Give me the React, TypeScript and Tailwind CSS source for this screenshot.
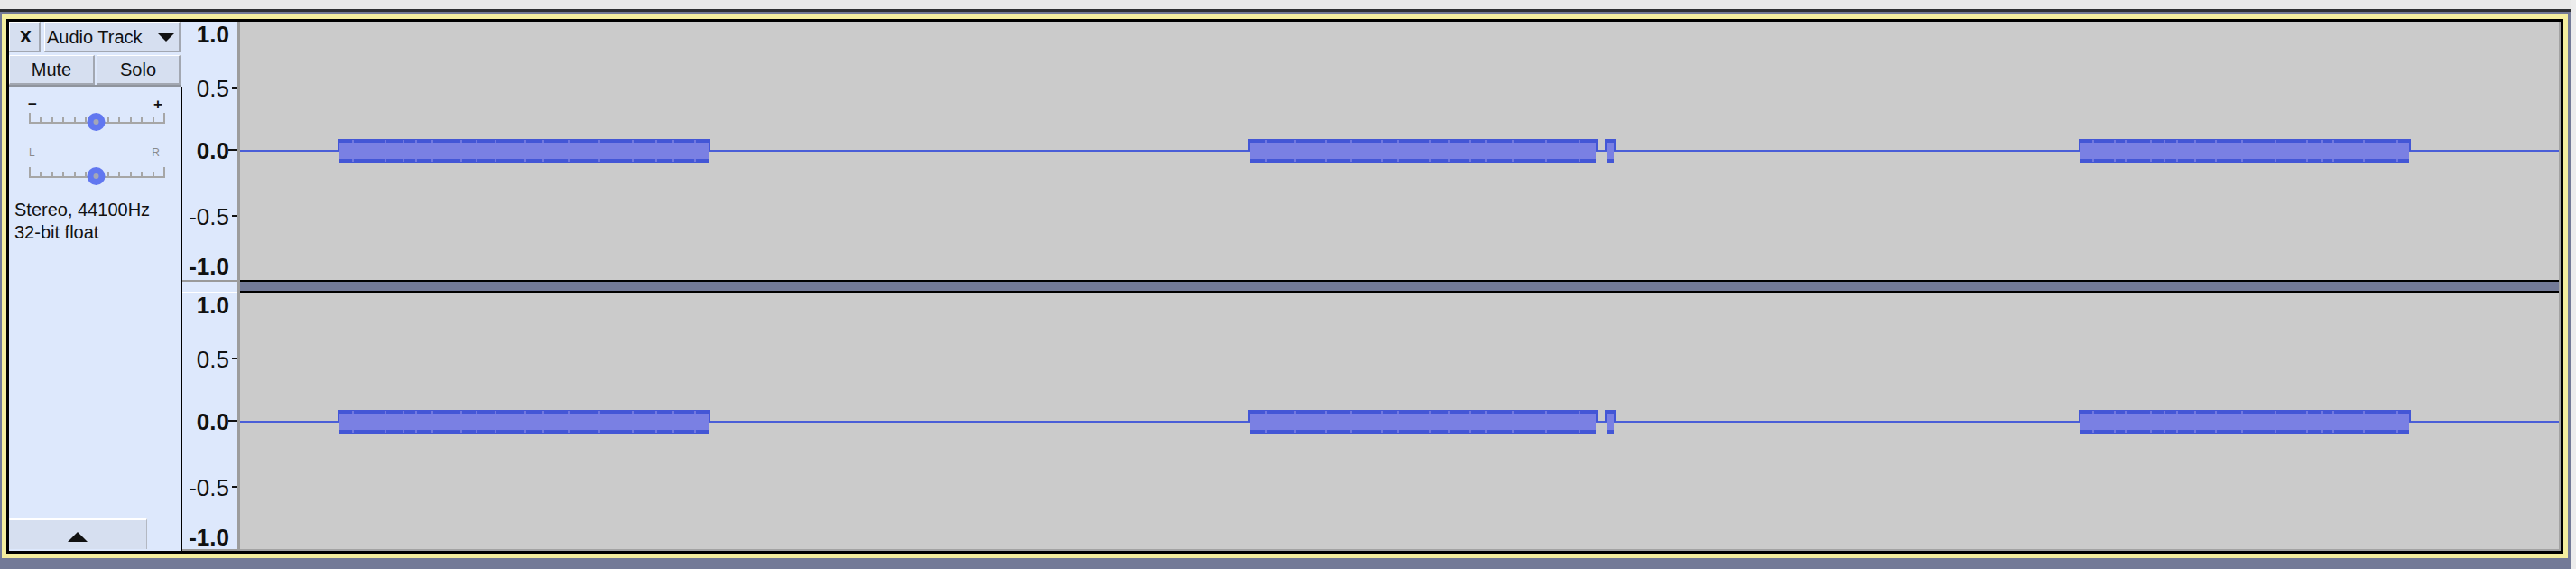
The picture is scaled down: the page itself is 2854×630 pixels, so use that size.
type Clip = { start: number; end: number };

// clip positions in waveform-local pixels (waveform starts at x=266)
const CLIPS: Clip[] = [
  { start: 108, end: 521 },
  { start: 1117, end: 1504 },
  { start: 1512, end: 1524 },
  { start: 2037, end: 2405 },
];

const WAVE_WIDTH = 2569;

type Mark = { label: string; top: number; bold?: boolean; tick?: number; tickTop?: number };

const MARKS: Mark[] = [
  { label: "1.0", top: 1, bold: true },
  { label: "0.5", top: 61, tick: 6, tickTop: 72 },
  { label: "0.0", top: 130, bold: true, tick: 10, tickTop: 141 },
  { label: "-0.5", top: 203, tick: 6, tickTop: 214 },
  { label: "-1.0", top: 258, bold: true },
];

function seeded(seed: number) {
  let s = seed;
  return () => {
    s = (s * 9301 + 49297) % 233280;
    return s / 233280;
  };
}

function clipNotches(clip: Clip, seed: number) {
  const rand = seeded(seed);
  const xs: number[] = [];
  let x = clip.start + 10 + rand() * 10;
  while (x < clip.end - 6) {
    xs.push(Math.round(x));
    x += 12 + rand() * 26;
  }
  return xs;
}

function ChannelWave({ height, seed }: { height: number; seed: number }) {
  const zero = 142;
  const top = zero - 12;
  const bottom = zero + 14;

  return (
    <svg width={WAVE_WIDTH} height={height} className="block">
      <rect x={0} y={zero} width={WAVE_WIDTH} height={2} fill="#4a5ed7" />
      {CLIPS.map((clip, i) => {
        const { start, end } = clip;
        const d = `M${start} ${top}H${end}V${zero + 1}H${end - 2}V${bottom}H${start + 2}V${zero + 1}H${start}Z`;
        return (
          <g key={i}>
            <path d={d} fill="#4356d6" />
            <rect
              x={start + 2}
              y={top + 4}
              width={end - start - 4}
              height={bottom - top - 8}
              fill="#7a80e3"
            />
            {clipNotches(clip, seed + i * 7).map((x) => (
              <g key={x}>
                <rect x={x} y={top + 1} width={2} height={3} fill="#7078e1" />
                <rect x={x} y={bottom - 4} width={2} height={3} fill="#7078e1" />
              </g>
            ))}
          </g>
        );
      })}
    </svg>
  );
}

function RulerChannel({ height }: { height: number }) {
  return (
    <div className="relative" style={{ height }}>
      {MARKS.map((mark) => (
        <div key={mark.label}>
          <span
            className={`absolute right-[9px] h-[26px] text-[26px] leading-[26px] text-[#111] ${
              mark.bold ? "font-bold" : "font-normal"
            }`}
            style={{ top: mark.top }}
          >
            {mark.label}
          </span>
          {mark.tick ? (
            <span
              className="absolute right-0 h-[2px] bg-[#111]"
              style={{ top: mark.tickTop, width: mark.tick }}
            />
          ) : null}
        </div>
      ))}
    </div>
  );
}

function Slider() {
  const ticks = Array.from({ length: 13 }, (_, i) => 22 + i * (149 / 12));
  return (
    <svg width={190} height={22} className="block">
      {ticks.map((x, i) => {
        const isEnd = i === 0 || i === 12;
        return (
          <rect
            key={i}
            x={Math.round(x)}
            y={isEnd ? 1 : 6}
            width={2}
            height={isEnd ? 11 : 6}
            fill="#a6a6a6"
          />
        );
      })}
      <rect x={22} y={11} width={151} height={2} fill="#a6a6a6" />
      <circle cx={96.5} cy={11} r={10} fill="#6177f0" />
      <circle cx={96.5} cy={11} r={3} fill="#a3a6b8" />
    </svg>
  );
}

function PanelButton({ className, children }: { className: string; children: React.ReactNode }) {
  return (
    <div
      className={`flex items-center border-t border-l border-t-white border-l-white border-r-2 border-b-2 border-r-[#a2a7b1] border-b-[#a2a7b1] bg-[#d6dff0] ${className}`}
    >
      {children}
    </div>
  );
}

function TrackControls() {
  return (
    <div className="flex w-[192px] flex-col text-[20px] leading-none text-[#111]">
      <div className="flex h-[72px] flex-col pr-[2px]">
        <div className="flex h-[34px] gap-[4px]">
          <PanelButton className="w-[35px] justify-center pl-[3px]">
            <span className="pb-[3px] text-[23px] font-bold">x</span>
          </PanelButton>
          <PanelButton className="flex-1 justify-between pl-[2px] pr-[4px]">
            <span>Audio Track</span>
            <svg width={20} height={10} className="block">
              <polygon points="0,0 20,0 10,10" fill="#111" />
            </svg>
          </PanelButton>
        </div>
        <div className="mt-[3px] flex h-[33px] gap-[2px]">
          <PanelButton className="w-[95px] justify-center">
            <span>Mute</span>
          </PanelButton>
          <PanelButton className="flex-1 justify-center">
            <span>Solo</span>
          </PanelButton>
        </div>
        <div className="mt-auto h-[2px] bg-[#8f949d]" />
      </div>

      <div className="flex flex-1 flex-col border-r-2 border-black">
        <div className="mt-[10px] flex h-[18px] items-center justify-between pl-[21px] pr-[20px] text-[17px] font-bold">
          <span>−</span>
          <span>+</span>
        </div>
        <Slider />
        <div className="mt-[14px] flex h-[18px] items-center justify-between pl-[22px] pr-[23px] text-[12px] text-[#8a8a8a]">
          <span>L</span>
          <span>R</span>
        </div>
        <div className="mt-[6px]">
          <Slider />
        </div>
        <div className="mt-[14px] pl-[6px] leading-[25px]">
          <p>Stereo, 44100Hz</p>
          <p>32-bit float</p>
        </div>
        <div className="mt-auto mb-[2px] flex h-[34px] w-[153px] items-center justify-center border-t-2 border-t-white border-r border-r-[#b3b8c2] bg-[#d6dff0] pt-[4px]">
          <svg width={22} height={11} className="block">
            <polygon points="0,11 22,11 11,0" fill="#111" />
          </svg>
        </div>
      </div>
    </div>
  );
}

function Ruler() {
  return (
    <div className="flex w-[64px] flex-col border-r-[3px] border-[#9c9c9c]">
      <RulerChannel height={286} />
      <div className="h-[14px] border-t-2 border-b border-t-[#9a9a9a] border-b-white" />
      <RulerChannel height={284} />
      <div className="h-[2px] bg-[#9a9a9a]" />
    </div>
  );
}

function Waveforms() {
  return (
    <div className="flex flex-1 flex-col border-r-2 border-[#a3a3a3] bg-[#cbcbcb]">
      <ChannelWave height={286} seed={11} />
      <div className="h-[14px] border-y-2 border-black bg-[#737a97]" />
      <ChannelWave height={284} seed={11} />
      <div className="h-[2px] bg-[#a3a3a3]" />
    </div>
  );
}

export default function App() {
  return (
    <div className="flex h-[630px] w-[2854px] overflow-hidden bg-[#ececec] font-['Liberation_Sans',Arial,sans-serif]">
      <div className="flex w-[2848px] flex-col">
        <div className="h-[10px] bg-[#e9e9e9]" />
        <div className="h-[3px] bg-[#2f3033]" />
        <div className="flex-1 bg-[#737a97] pt-[2px] pr-[3px] pb-[12px] pl-[2px]">
          <div className="h-full border-[5px] border-t-[6px] border-[#f4ee9e]">
            <div className="flex h-full border-[3px] border-black bg-[#dde8fc]">
              <TrackControls />
              <Ruler />
              <Waveforms />
            </div>
          </div>
        </div>
      </div>
      <div className="w-[6px] bg-[#ececec]" />
    </div>
  );
}
